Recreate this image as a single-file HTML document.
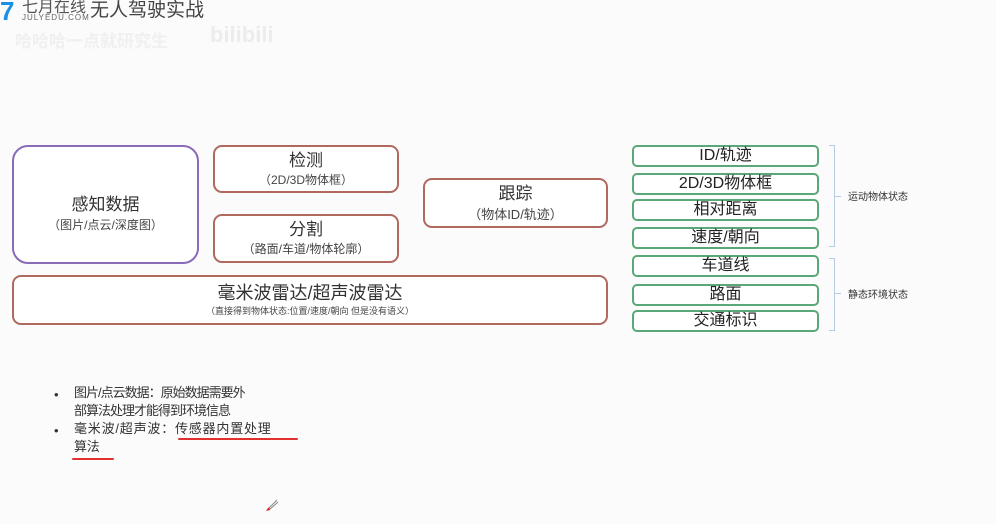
<!DOCTYPE html>
<html><head><meta charset="utf-8"><style>
*{margin:0;padding:0;box-sizing:border-box}
body{width:996px;height:524px;background:#fbfbfb;position:relative;overflow:hidden;font-family:"Liberation Sans","Noto Sans CJK SC",sans-serif;color:#333}
.b{position:absolute;border:2px solid #b0695f;border-radius:9px;background:#fff;text-align:center}
.g{position:absolute;border:2px solid #5aa877;border-radius:5px;background:#fff;text-align:center;font-size:16px;line-height:18px;color:#222;left:632px;width:187px;height:22px}
.t{font-size:17px;color:#333}
.s{font-size:12px;color:#444}
.abs{position:absolute;white-space:nowrap}
.bl{font-size:13px;line-height:17px;color:#333;letter-spacing:-0.3px}
</style></head><body>
<div class="abs" style="left:0;top:0;width:16px;height:22px;color:#1a8fe3;font-size:26px;font-weight:bold;line-height:22px">7</div>
<div class="abs" style="left:22px;top:0px;font-size:16px;color:#555;line-height:16px">七月在线</div>
<div class="abs" style="left:22px;top:13px;font-size:8px;color:#666;letter-spacing:1px">JULYEDU.COM</div>
<div class="abs" style="left:90px;top:0;font-size:19px;color:#444;line-height:22px">无人驾驶实战</div>
<div class="abs" style="left:15px;top:27px;font-size:17px;color:#f0f0f0;font-weight:bold">哈哈哈一点就研究生</div>
<div class="abs" style="left:210px;top:22px;font-size:22px;color:#ececec;font-weight:bold">bilibili</div>

<div class="b" style="left:12px;top:145px;width:187px;height:119px;border-color:#8a6bb8;border-radius:16px;padding-top:43px"><div class="t">感知数据</div><div class="s" style="margin-top:1px">（图片/点云/深度图）</div></div>
<div class="b" style="left:213px;top:145px;width:186px;height:48px;padding-top:4px"><div class="t" style="line-height:20px">检测</div><div class="s">（2D/3D物体框）</div></div>
<div class="b" style="left:213px;top:214px;width:186px;height:49px;padding-top:4px"><div class="t" style="line-height:20px">分割</div><div class="s">（路面/车道/物体轮廓）</div></div>
<div class="b" style="left:423px;top:178px;width:185px;height:50px;padding-top:4px"><div class="t" style="line-height:20px">跟踪</div><div class="s" style="font-size:13px">（物体ID/轨迹）</div></div>
<div class="b" style="left:12px;top:275px;width:596px;height:50px;padding-top:5px"><div class="t" style="font-size:18px;line-height:22px">毫米波雷达/超声波雷达</div><div class="s" style="font-size:9px">（直接得到物体状态:位置/速度/朝向 但是没有语义）</div></div>

<div class="g" style="top:145px">ID/轨迹</div>
<div class="g" style="top:173px">2D/3D物体框</div>
<div class="g" style="top:199px">相对距离</div>
<div class="g" style="top:227px">速度/朝向</div>
<div class="g" style="top:255px">车道线</div>
<div class="g" style="top:284px">路面</div>
<div class="g" style="top:310px">交通标识</div>

<div class="abs" style="left:829px;top:145px;width:6px;height:102px;border:1px solid #b8cbe6;border-left:none"></div>
<div class="abs" style="left:835px;top:196px;width:6px;border-top:1px solid #b8cbe6"></div>
<div class="abs" style="left:848px;top:188px;font-size:10px;color:#333">运动物体状态</div>
<div class="abs" style="left:829px;top:258px;width:6px;height:73px;border:1px solid #b8cbe6;border-left:none"></div>
<div class="abs" style="left:835px;top:293px;width:6px;border-top:1px solid #b8cbe6"></div>
<div class="abs" style="left:848px;top:286px;font-size:10px;color:#333">静态环境状态</div>

<div class="abs bl" style="left:54px;top:386px">•</div>
<div class="abs bl" style="left:74px;top:384px;letter-spacing:-1px">图片/点云数据：原始数据需要外</div>
<div class="abs bl" style="left:74px;top:402px;letter-spacing:-1px">部算法处理才能得到环境信息</div>
<div class="abs bl" style="left:54px;top:422px">•</div>
<div class="abs bl" style="left:74px;top:420px;letter-spacing:0.8px">毫米波/超声波：传感器内置处理</div>
<div class="abs bl" style="left:74px;top:438px">算法</div>
<div class="abs" style="left:178px;top:438px;width:120px;height:2px;background:#e03030;border-radius:1px"></div>
<div class="abs" style="left:72px;top:458px;width:42px;height:2px;background:#e03030;border-radius:1px"></div>
<svg class="abs" style="left:265px;top:498px" width="14" height="14"><path d="M2 12 L12 2 M4 12 L13 4" stroke="#888" stroke-width="1"/><path d="M1 13 L4 9 L5 12 Z" fill="#e02020"/></svg>
</body></html>
